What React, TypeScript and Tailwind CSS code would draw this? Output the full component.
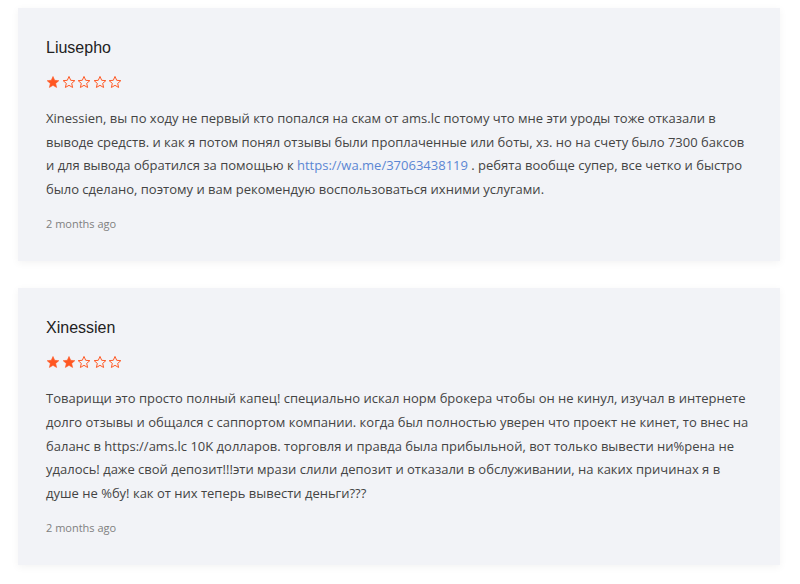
import React from "react";

interface Review { name: string; rating: number; date: string; body: React.ReactNode; }

function Star({ filled }: { filled: boolean }) {
  return (
    <svg width="14" height="14" viewBox="0 0 24 24" className="shrink-0">
      <path
        d="M12 2.5l2.9 6.6 7.1.6-5.4 4.7 1.6 7-6.2-3.7-6.2 3.7 1.6-7L2 9.7l7.1-.6z"
        fill={filled ? "#ff5722" : "none"}
        stroke="#ff5722"
        strokeWidth={filled ? 1 : 1.7}
        strokeLinejoin="round"
      />
    </svg>
  );
}

const reviews: Review[] = [
  {
    name: "Liusepho",
    rating: 1,
    date: "2 months ago",
    body: (
      <>
        Xinessien, вы по ходу не первый кто попался на скам от ams.lc потому что мне эти уроды тоже отказали в выводе средств. и как я потом понял отзывы были проплаченные или боты, хз. но на счету было 7300 баксов и для вывода обратился за помощью к{" "}
        <a className="text-[#5b86d3]">https://wa.me/37063438119</a> . ребята вообще супер, все четко и быстро было сделано, поэтому и вам рекомендую воспользоваться ихними услугами.
      </>
    ),
  },
  {
    name: "Xinessien",
    rating: 2,
    date: "2 months ago",
    body: (
      <>
        Товарищи это просто полный капец! специально искал норм брокера чтобы он не кинул, изучал в интернете долго отзывы и общался с саппортом компании. когда был полностью уверен что проект не кинет, то внес на баланс в https://ams.lc 10K долларов. торговля и правда была прибыльной, вот только вывести ни%рена не удалось! даже свой депозит!!!эти мрази слили депозит и отказали в обслуживании, на каких причинах я в душе не %бу! как от них теперь вывести деньги???
      </>
    ),
  },
];

export default function App() {
  return (
    <div className="min-h-[584px] bg-white pt-2 pl-[18px] pr-[20px] flex flex-col gap-[27px]">
      {reviews.map(r => (
        <div key={r.name} className="bg-[#f2f3f7] pl-[28px] pr-[30px] pt-[30px] pb-[29px] shadow-[0_2px_8px_rgba(0,0,0,0.05)]">
          <div className="text-[16px] leading-[20px] text-[#222] font-['Liberation_Sans',Arial,sans-serif]">{r.name}</div>
          <div className="flex gap-[1.5px] mt-[17px]">
            {[0, 1, 2, 3, 4].map(i => <Star key={i} filled={i < r.rating} />)}
          </div>
          <p className="mt-[18px] text-[13px] leading-[23.6px] text-[#444] font-['Open_Sans',sans-serif]">{r.body}</p>
          <div className="mt-[15px] text-[11px] leading-[16px] text-[#808080] font-['Open_Sans',sans-serif]">{r.date}</div>
        </div>
      ))}
    </div>
  );
}
